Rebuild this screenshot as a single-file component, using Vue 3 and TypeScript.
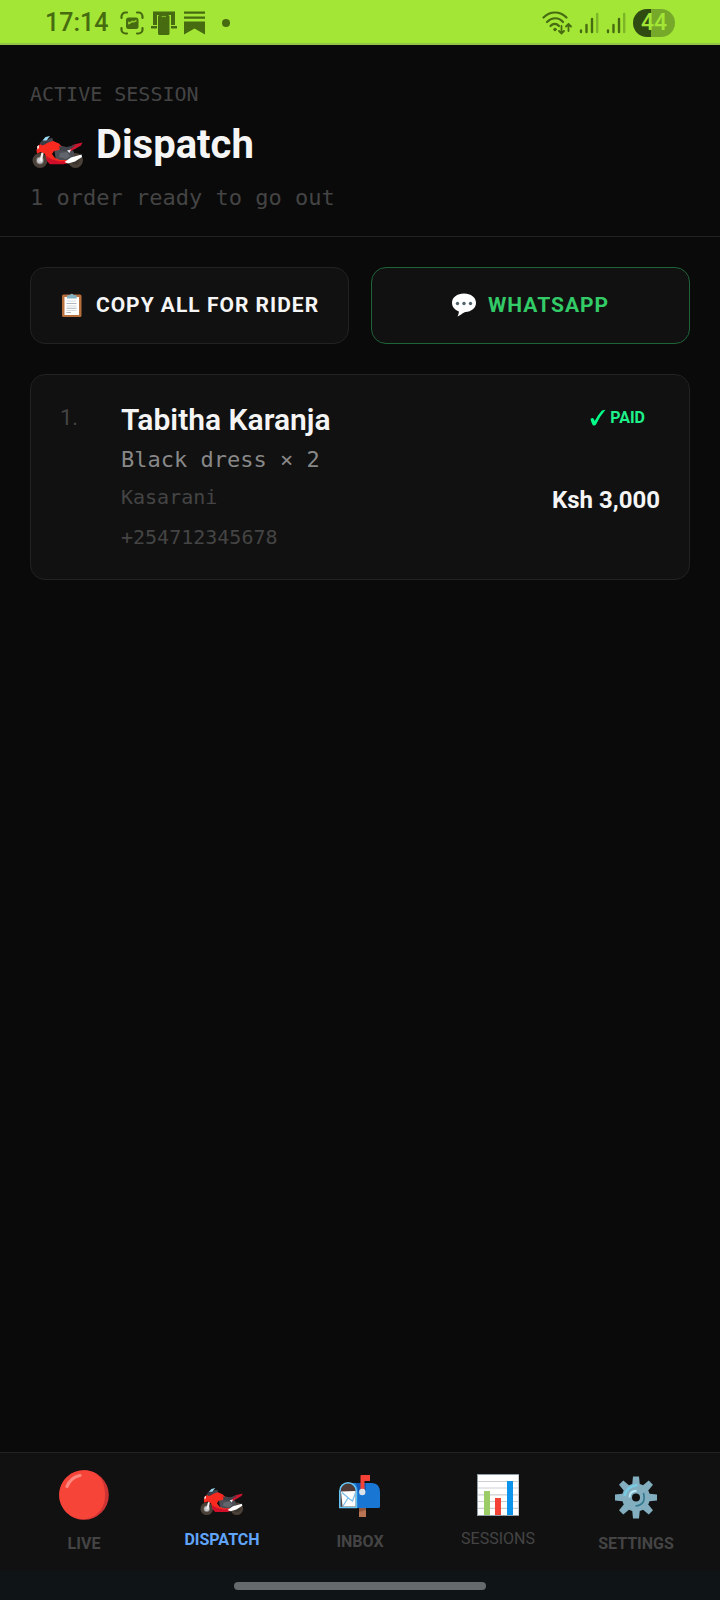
<script setup lang="ts">
import { ref } from 'vue'

interface Order {
  id: number
  name: string
  item: string
  quantity: number
  area: string
  phone: string
  total: number
}

interface Tab {
  id: string
  label: string
}

const orders: Order[] = [
  {
    id: 1,
    name: 'Tabitha Karanja',
    item: 'Black dress',
    quantity: 2,
    area: 'Kasarani',
    phone: '+254712345678',
    total: 3000,
  },
]

const tabs: Tab[] = [
  { id: 'live', label: 'LIVE' },
  { id: 'dispatch', label: 'DISPATCH' },
  { id: 'inbox', label: 'INBOX' },
  { id: 'sessions', label: 'SESSIONS' },
  { id: 'settings', label: 'SETTINGS' },
]

const activeTab = ref('dispatch')

const formatAmount = (value: number): string => 'Ksh ' + value.toLocaleString('en-US')
</script>

<template>
  <div class="screen">
    <svg class="defs" width="0" height="0" aria-hidden="true">
      <symbol id="bike" viewBox="0 0 52 33">
        <circle cx="8" cy="24.500" r="5.700" fill="#77726f" stroke="#4a4038" stroke-width="3.600" />
        <circle cx="8" cy="24.500" r="3" fill="#c9c9cc" />
        <circle cx="43.500" cy="24.500" r="5.700" fill="#3b342e" stroke="#4a4038" stroke-width="3.600" />
        <path d="M22 12 30 10 38 12 42 16 42 21 36 27 24 25Z" fill="#4c4e55" />
        <path d="M4.500 14 6 10 10 6.500 20 4.500 27 7.500 30 11 27 14 22 15 20 18 23 22 28 24 37 24 36 27 31 28 18 28 15 24 13 18 9 16 5 17.500Z" fill="#f8291e" />
        <path d="M14 20 19 23 28 25.500 37 24.500 35.500 27 31.500 28.300 18 28.300 15 25Z" fill="#cf0f29" />
        <path d="M35 12.500 42 8.500 50.500 6.500 49 9.500 43 13 38 15.500Z" fill="#d0152f" />
        <path d="M27 10 33 11.500 45 8.500 39 12.500 36 15 28 14.500Z" fill="#404249" />
        <path d="M7.500 7.500 10 4.500 16 3 18 5 13 8.500 10 9.500Z" fill="#3a3d45" />
        <path d="M10.500 4.500 13.500 1 18 0 14.500 4.500Z" fill="#9bd8f2" />
        <path d="M17 2.500 20.500 2 21 5 15 7Z" fill="#45484f" />
        <path d="M5 10.500 7 9 7 12 5.500 13.500Z" fill="#ffe3df" />
        <path d="M28 17 35 16 38 20 34 23 27 21Z" fill="#62656c" />
        <path d="M7.500 24.500 9.500 16.500 11.500 17 10 25.500Z" fill="#f3f0f1" />
        <path d="M35 14.500 39 13.500 37.500 17Z" fill="#e9ebef" />
        <path d="M32.500 26 39 21.500 49.500 18.500 50 21 43 25.500 36 27.500Z" fill="#fff" />
      </symbol>
    </svg>

    <div class="status">
      <div class="status-left">
        <span class="clock">17:14</span>
        <svg width="24" height="24" viewBox="0 0 24 24" fill="none" aria-hidden="true">
          <path d="M1.500 7V5.500a4 4 0 0 1 4-4H7M17 1.500h1.500a4 4 0 0 1 4 4V7M22.500 17v1.500a4 4 0 0 1-4 4H17M7 22.500H5.500a4 4 0 0 1-4-4V17" stroke="#466b10" stroke-width="2.200" stroke-linecap="round" />
          <rect x="6" y="6.500" width="12.500" height="11.500" rx="2.500" fill="#466b10" />
          <path d="M8 13.500V10.500l2 .5 2-1.500 2 .5 2.500-1.500v2l-2.500 1-2 0-2 1.500Z" fill="#8cc92c" />
        </svg>
        <svg width="26" height="24" viewBox="0 0 26 24" aria-hidden="true">
          <path d="M2 .500h22V14h-4V4H6v10H2Z" fill="#466b10" />
          <path d="M0 15h6v2.500H0ZM20 15h6v2.500h-6Z" fill="#466b10" />
          <rect x="7" y="4" width="11.500" height="20" rx="1.500" fill="#466b10" />
          <path d="M10.500 5.500h4.500" stroke="#7bb325" stroke-width="1.200" />
        </svg>
        <svg width="22" height="24" viewBox="0 0 22 24" aria-hidden="true">
          <path d="M0 .500h21v2.300H0ZM0 5.500h21v2.300H0ZM0 10.500h21V23.500L10.500 17.500 0 23.500Z" fill="#466b10" />
        </svg>
        <span class="dot"></span>
      </div>
      <div class="status-right">
        <svg width="31" height="24" viewBox="0 0 31 24" fill="none" stroke="#466b10" stroke-width="2.200" stroke-linecap="round" aria-hidden="true">
          <path d="M2.500 6.500C9-.200 19-.200 25.500 6.500M6 11c5-5 11.500-5 16 0M9.500 15c2.500-2.800 6-2.800 8.500 0" />
          <circle cx="14" cy="18.500" r="1.300" fill="#466b10" stroke-width="1" />
          <path d="M20.500 15v7M18 20l2.500 2.500L23 20M27.500 20v-7M25 15.500l2.500-2.500 2.500 2.500" stroke-width="1.800" />
        </svg>
        <svg v-for="n in 2" :key="n" width="20" height="22" viewBox="0 0 20 22" fill="none" stroke="#466b10" stroke-width="2.400" stroke-linecap="round" aria-hidden="true">
          <path d="M2 18.500v1.500M7.500 13v7M13 7v13" />
          <path d="M18.200 2v18" stroke="#7db528" />
        </svg>
        <span class="battery">44</span>
      </div>
    </div>

    <header class="header">
      <p class="eyebrow">ACTIVE SESSION</p>
      <h1 class="title">
        <svg width="52" height="33" aria-hidden="true"><use href="#bike" /></svg>
        <span>Dispatch</span>
      </h1>
      <p class="subtitle">{{ orders.length }} order ready to go out</p>
    </header>

    <main class="main">
      <div class="actions">
        <button type="button" class="action">
          <svg width="24" height="26" viewBox="0 0 24 26" aria-hidden="true">
            <rect x="2" y="2.500" width="19.500" height="22.500" rx="1.500" fill="#b56f3c" />
            <rect x="4.500" y="5" width="14.500" height="18" fill="#fff" />
            <path d="M6.500 9h10M6.500 14h10M6.500 18.500h10" stroke="#d5dbe0" stroke-width="1.200" />
            <path d="M6.500 11.500h10M6.500 16.200h10M6.500 20.500h4.500" stroke="#adb7bf" stroke-width="1.100" />
            <path d="M7 6.500V4.200Q7 3 9 3h1.200a1.700 1.700 0 0 1 3.300 0h1.200q2 0 2 1.200v2.300Z" fill="#82aebf" />
          </svg>
          <span>COPY ALL FOR RIDER</span>
        </button>
        <button type="button" class="action whatsapp">
          <svg width="24" height="26" viewBox="0 0 24 26" aria-hidden="true">
            <path d="M12 1.500c7 0 12 4 12 9.300s-4.700 9-10.500 9.300c-2 .1-3.500 2.500-8 4.400 1-1.800 1.500-3.500 1.200-5.200C2.800 18 0 15 0 10.800 0 5.500 5 1.500 12 1.500Z" fill="#fff" />
            <g fill="#4f626c"><circle cx="5.500" cy="11.500" r="1.700" /><circle cx="12" cy="11.500" r="1.700" /><circle cx="18.500" cy="11.500" r="1.700" /></g>
          </svg>
          <span>WHATSAPP</span>
        </button>
      </div>

      <article v-for="(order, index) in orders" :key="order.id" class="order">
        <span class="number">{{ index + 1 }}.</span>
        <div class="details">
          <h2 class="name">{{ order.name }}</h2>
          <p class="item">{{ order.item }} × {{ order.quantity }}</p>
          <p class="meta">{{ order.area }}</p>
          <p class="meta">{{ order.phone }}</p>
        </div>
        <div class="summary">
          <span class="paid">
            <svg width="16" height="18" viewBox="0 0 16 18" aria-hidden="true">
              <path d="M.500 10q2-1.800 3.200-.2l1 2.200Q8.500 5 12 1.500l3.500-.8Q9.500 7.500 6 15.500q-1.300 1.700-3.200.8Q1.200 13.500.500 10Z" fill="#00ff88" />
            </svg>
            PAID
          </span>
          <strong class="price">{{ formatAmount(order.total) }}</strong>
        </div>
      </article>
    </main>

    <nav class="tabs" aria-label="Main">
      <button
        v-for="tab in tabs"
        :key="tab.id"
        type="button"
        class="tab"
        :class="[tab.id, { active: activeTab === tab.id }]"
        :aria-current="activeTab === tab.id ? 'page' : undefined"
        @click="activeTab = tab.id"
      >
        <svg v-if="tab.id === 'live'" width="56" height="64" viewBox="0 0 56 64" aria-hidden="true">
          <circle cx="28" cy="26" r="24.800" fill="#cf3434" />
          <path d="M28 1.200c13 0 21 9 21 24.800 0 13-8 23-21 24.300C14 50.300 3.200 39.500 3.200 26S14 1.200 28 1.200Z" fill="#f64438" />
          <path d="M11 17.500q3.500-9 13-11" fill="none" stroke="#ff887e" stroke-width="3.200" stroke-linecap="round" />
        </svg>
        <svg v-else-if="tab.id === 'dispatch'" width="44" height="56" viewBox="0 0 44 56" aria-hidden="true">
          <use href="#bike" x="0" y="15" width="44" height="28" />
        </svg>
        <svg v-else-if="tab.id === 'inbox'" width="42" height="60" viewBox="0 0 42 60" aria-hidden="true">
          <rect x="20" y="36" width="7" height="10" fill="#b97454" />
          <path d="M20 36h7v3l-7 2Z" fill="#95573c" />
          <path d="M9 12h24q8 0 8 10v13.500q0 1.500-1.500 1.500H9Z" fill="#1976d2" />
          <path d="M17 12h10v11h-7Z" fill="#1258b5" />
          <path d="M.800 36.500V20a8.300 8.300 0 0 1 16.600 0v16.500Z" fill="#513b38" stroke="#65c5f5" stroke-width="1.600" />
          <path d="M2 20.500 16.500 20v15.500H3.500Z" fill="#fff" />
          <path d="M3 21.500 10.500 28l3 2 3-8M4 35l5-8" fill="none" stroke="#78bcec" stroke-width="1.200" />
          <path d="M21.500 20V5q0-1 1-1H31v6h-5.500v10Z" fill="#f44336" />
          <circle cx="23.300" cy="21" r="3.200" fill="#dce4ea" />
        </svg>
        <svg v-else-if="tab.id === 'sessions'" width="42" height="54" viewBox="0 0 42 54" aria-hidden="true">
          <rect width="42" height="42" fill="#8f9ca4" />
          <rect x="1" y="1" width="40.500" height="40" fill="#fff" />
          <path d="M1 7.500h40M1 14h40M1 20.800h40M1 27.500h40M1 34.300h40" stroke="#cbd0d3" stroke-width="1.200" />
          <path d="M7 17h6v24H7Z" fill="#9ccc65" />
          <path d="M18 24h6v17h-6Z" fill="#f44336" />
          <path d="M30 7h6v34h-6Z" fill="#0c93ec" />
        </svg>
        <svg v-else width="42" height="64" viewBox="0 0 42 64" aria-hidden="true">
          <g fill="#82aec0">
            <path v-for="n in 8" :key="n" d="M18 7.500h6l1 10h-8Z" :transform="`rotate(${n * 45} 21 28.5)`" />
          </g>
          <circle cx="21" cy="28.500" r="9" fill="none" stroke="#82aec0" stroke-width="10" />
          <path d="M9.500 27q2-10 13-11" fill="none" stroke="#77cce4" stroke-width="2.500" />
          <path d="M14.500 28.500q0-6.500 7-6.800" fill="none" stroke="#b9eaf5" stroke-width="2" />
          <path d="M28.500 24q3 12-8 13" fill="none" stroke="#32788e" stroke-width="1.600" />
        </svg>
        <span>{{ tab.label }}</span>
      </button>
    </nav>
    <div class="gesture"><span></span></div>
  </div>
</template>

<style>
body {
  margin: 0;
  background: #0a0a0a;
}
</style>

<style scoped>
.screen {
  --mono: "DejaVu Sans Mono", monospace;
  display: flex;
  flex-direction: column;
  min-height: 100vh;
  background: #0a0a0a;
  color: #f5f5f5;
  font-family: Roboto, sans-serif;
}

.screen * {
  box-sizing: border-box;
}

.defs {
  position: absolute;
}

svg {
  flex: none;
}

h1,
h2,
p {
  margin: 0;
}

button {
  margin: 0;
  padding: 0;
  border: 0;
  background: none;
  color: inherit;
  cursor: pointer;
}

.status {
  display: flex;
  align-items: center;
  justify-content: space-between;
  height: 45px;
  padding: 3px 45px 0;
  border-bottom: 2px solid #93c447;
  background: #a3e635;
  color: #466b10;
}

.status-left,
.status-right {
  display: flex;
  align-items: center;
  gap: 7px;
}

.clock {
  margin-right: 5px;
  font-size: 25px;
  font-weight: 500;
  line-height: 32px;
}

.dot {
  width: 8px;
  height: 8px;
  margin-left: 9px;
  border-radius: 50%;
  background: #466b10;
}

.battery {
  width: 42px;
  border-radius: 14px;
  background: linear-gradient(90deg, #304b12 43%, #76a929 43%);
  color: #a3e635;
  font-size: 23px;
  font-weight: 500;
  line-height: 28px;
  text-align: center;
}

.header {
  display: flex;
  flex-direction: column;
  gap: 14px;
  padding: 37px 30px 24px;
  border-bottom: 1px solid #222;
}

.eyebrow {
  color: #444;
  font-family: var(--mono);
  font-size: 20px;
  line-height: 24px;
}

.title {
  display: flex;
  align-items: center;
  gap: 12px;
  padding-left: 2px;
  font-size: 40px;
  font-weight: 700;
  line-height: 50px;
}

.title svg {
  margin-top: 14px;
}

.subtitle {
  color: #444;
  font-family: var(--mono);
  font-size: 22px;
  line-height: 28px;
}

.main {
  display: flex;
  flex: 1;
  flex-direction: column;
  gap: 30px;
  padding: 30px;
}

.actions {
  display: grid;
  grid-template-columns: 1fr 1fr;
  gap: 22px;
}

.action {
  display: flex;
  align-items: center;
  justify-content: center;
  gap: 12px;
  padding: 23px 0 24px;
  border: 1px solid #222;
  border-radius: 15px;
  background: #111;
  font-family: inherit;
  font-size: 21px;
  font-weight: 700;
  line-height: 28px;
  letter-spacing: 1px;
  white-space: nowrap;
}

.whatsapp {
  border-color: #1f6338;
  color: #33cb68;
}

.order {
  display: flex;
  padding: 29px;
  border: 1px solid #222;
  border-radius: 15px;
  background: #111;
}

.number {
  width: 61px;
  color: #444;
  font-size: 22px;
  line-height: 28px;
}

.details {
  flex: 1;
}

.name {
  font-size: 30px;
  font-weight: 600;
  line-height: 32px;
}

.item {
  margin: 10px 0;
  color: #888;
  font-family: var(--mono);
  font-size: 22px;
  line-height: 28px;
}

.meta {
  color: #444;
  font-family: var(--mono);
  font-size: 20px;
  line-height: 26px;
}

.meta + .meta {
  margin-top: 14px;
}

.summary {
  display: flex;
  flex-direction: column;
  align-items: flex-end;
  gap: 52px;
}

.paid {
  display: flex;
  align-items: center;
  gap: 4px;
  padding-right: 15px;
  color: #1ef08a;
  font-size: 16px;
  font-weight: 700;
  line-height: 28px;
}

.price {
  font-size: 24px;
  line-height: 32px;
}

.tabs {
  display: flex;
  align-items: center;
  height: 119px;
  padding: 0 15px;
  border-top: 1px solid #222;
  background: #111;
}

.tab {
  display: flex;
  flex: 1;
  flex-direction: column;
  align-items: center;
  color: #444;
  font-family: inherit;
  font-size: 16px;
  font-weight: 700;
  line-height: 22px;
}

.tab.sessions {
  font-weight: 400;
}

.tab.active {
  color: #60a5fa;
}

.gesture {
  display: flex;
  align-items: center;
  justify-content: center;
  height: 29px;
  background: #0f1416;
}

.gesture span {
  width: 35%;
  height: 8px;
  border-radius: 4px;
  background: #656a6c;
}
</style>
